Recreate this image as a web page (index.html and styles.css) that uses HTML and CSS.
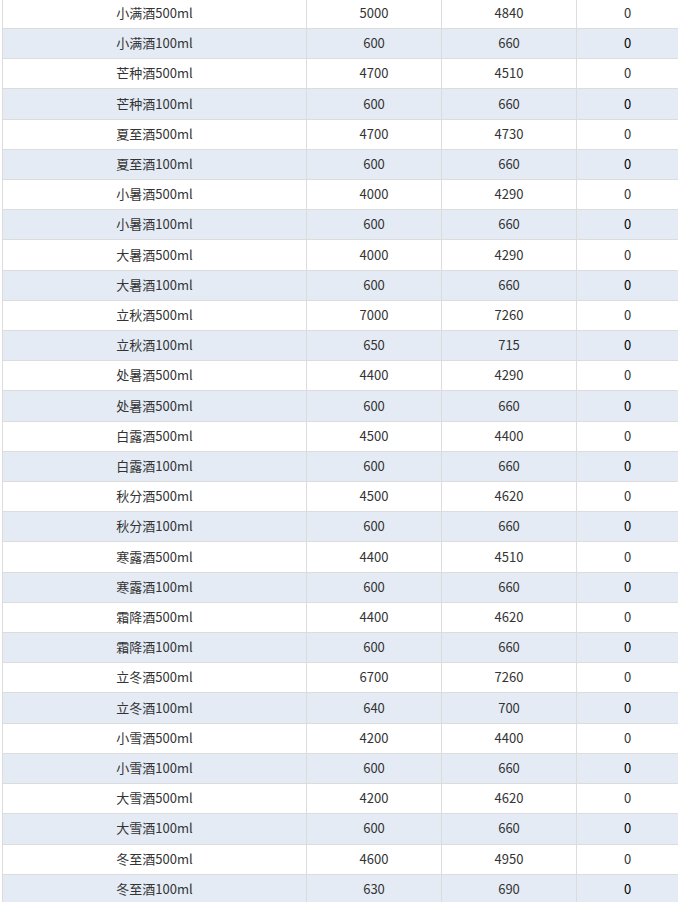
FILE: index.html
```html
<!DOCTYPE html>
<html lang="zh">
<head>
<meta charset="utf-8">
<title>酒品列表</title>
<link rel="stylesheet" href="styles.css">
</head>
<body>
<div class="wrap">
  <div class="table">
    <div class="row"><div class="c">小满酒500ml</div><div class="c">5000</div><div class="c">4840</div><div class="c z">0</div></div>
    <div class="row alt"><div class="c">小满酒100ml</div><div class="c">600</div><div class="c">660</div><div class="c z">0</div></div>
    <div class="row"><div class="c">芒种酒500ml</div><div class="c">4700</div><div class="c">4510</div><div class="c z">0</div></div>
    <div class="row alt"><div class="c">芒种酒100ml</div><div class="c">600</div><div class="c">660</div><div class="c z">0</div></div>
    <div class="row"><div class="c">夏至酒500ml</div><div class="c">4700</div><div class="c">4730</div><div class="c z">0</div></div>
    <div class="row alt"><div class="c">夏至酒100ml</div><div class="c">600</div><div class="c">660</div><div class="c z">0</div></div>
    <div class="row"><div class="c">小暑酒500ml</div><div class="c">4000</div><div class="c">4290</div><div class="c z">0</div></div>
    <div class="row alt"><div class="c">小暑酒100ml</div><div class="c">600</div><div class="c">660</div><div class="c z">0</div></div>
    <div class="row"><div class="c">大暑酒500ml</div><div class="c">4000</div><div class="c">4290</div><div class="c z">0</div></div>
    <div class="row alt"><div class="c">大暑酒100ml</div><div class="c">600</div><div class="c">660</div><div class="c z">0</div></div>
    <div class="row"><div class="c">立秋酒500ml</div><div class="c">7000</div><div class="c">7260</div><div class="c z">0</div></div>
    <div class="row alt"><div class="c">立秋酒100ml</div><div class="c">650</div><div class="c">715</div><div class="c z">0</div></div>
    <div class="row"><div class="c">处暑酒500ml</div><div class="c">4400</div><div class="c">4290</div><div class="c z">0</div></div>
    <div class="row alt"><div class="c">处暑酒500ml</div><div class="c">600</div><div class="c">660</div><div class="c z">0</div></div>
    <div class="row"><div class="c">白露酒500ml</div><div class="c">4500</div><div class="c">4400</div><div class="c z">0</div></div>
    <div class="row alt"><div class="c">白露酒100ml</div><div class="c">600</div><div class="c">660</div><div class="c z">0</div></div>
    <div class="row"><div class="c">秋分酒500ml</div><div class="c">4500</div><div class="c">4620</div><div class="c z">0</div></div>
    <div class="row alt"><div class="c">秋分酒100ml</div><div class="c">600</div><div class="c">660</div><div class="c z">0</div></div>
    <div class="row"><div class="c">寒露酒500ml</div><div class="c">4400</div><div class="c">4510</div><div class="c z">0</div></div>
    <div class="row alt"><div class="c">寒露酒100ml</div><div class="c">600</div><div class="c">660</div><div class="c z">0</div></div>
    <div class="row"><div class="c">霜降酒500ml</div><div class="c">4400</div><div class="c">4620</div><div class="c z">0</div></div>
    <div class="row alt"><div class="c">霜降酒100ml</div><div class="c">600</div><div class="c">660</div><div class="c z">0</div></div>
    <div class="row"><div class="c">立冬酒500ml</div><div class="c">6700</div><div class="c">7260</div><div class="c z">0</div></div>
    <div class="row alt"><div class="c">立冬酒100ml</div><div class="c">640</div><div class="c">700</div><div class="c z">0</div></div>
    <div class="row"><div class="c">小雪酒500ml</div><div class="c">4200</div><div class="c">4400</div><div class="c z">0</div></div>
    <div class="row alt"><div class="c">小雪酒100ml</div><div class="c">600</div><div class="c">660</div><div class="c z">0</div></div>
    <div class="row"><div class="c">大雪酒500ml</div><div class="c">4200</div><div class="c">4620</div><div class="c z">0</div></div>
    <div class="row alt"><div class="c">大雪酒100ml</div><div class="c">600</div><div class="c">660</div><div class="c z">0</div></div>
    <div class="row"><div class="c">冬至酒500ml</div><div class="c">4600</div><div class="c">4950</div><div class="c z">0</div></div>
    <div class="row alt"><div class="c">冬至酒100ml</div><div class="c">630</div><div class="c">690</div><div class="c z">0</div></div>
  </div>
</div>
</body>
</html>
```
FILE: styles.css
```css
html, body {
  margin: 0;
  padding: 0;
  overflow: hidden;
  background: #fff;
}
body {
  font-family: "Noto Sans CJK SC", "Noto Sans", sans-serif;
  font-size: 13px;
  color: #333;
}
.wrap {
  padding-left: 2px;
  margin-top: -1.2px;
}
.table {
  width: 676px;
}
.row {
  display: grid;
  grid-template-columns: 305px 135px 135px 101px;
  height: 30.21px;
  box-sizing: border-box;
  border-bottom: 1px solid #dcdcdc;
}
.row.alt {
  background: #e4ebf5;
}
.c {
  display: flex;
  align-items: center;
  justify-content: center;
  border-right: 1px solid #dcdcdc;
  line-height: 18px;
  padding-bottom: 1px;
  box-sizing: border-box;
}
.c:first-child {
  border-left: 1px solid #dcdcdc;
}
.c:last-child {
  border-right: none;
}
.alt .z {
  color: #000;
}
```
